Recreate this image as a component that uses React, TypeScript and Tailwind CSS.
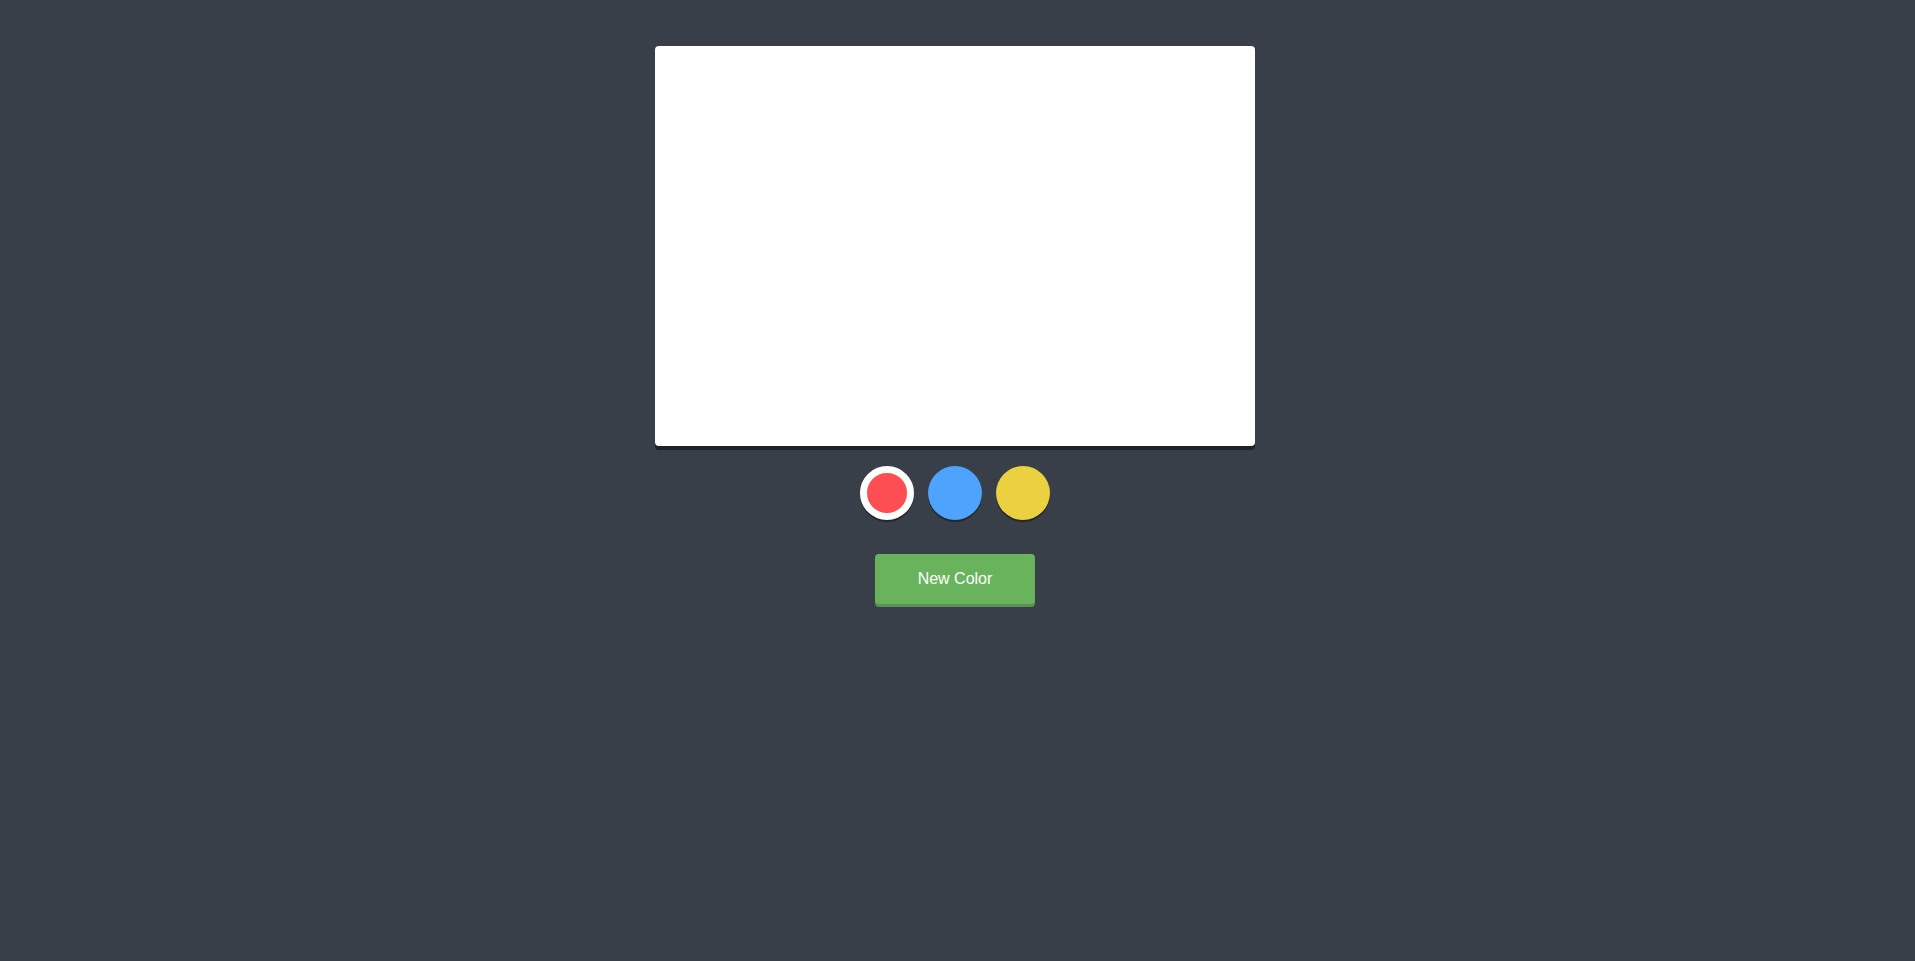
import React, { useState } from "react";

const colors = ["#fd4f53", "#4ea3fc", "#ebd13f"];

export default function App() {
  const [sel, setSel] = useState(0);
  return (
    <div className="min-h-screen w-full bg-[#383f48] flex flex-col items-center pt-[46px] pr-[5px]" style={{ fontFamily: '"Liberation Sans", Arial, sans-serif' }}>
      <div className="w-[600px] h-[400px] bg-white rounded-[4px] shadow-[0_4px_0_#1f2226]" />
      <div className="flex gap-[14px] mt-5">
        {colors.map((c, i) => (
          <button
            key={c}
            onClick={() => setSel(i)}
            className={
              i === sel
                ? "w-[54px] h-[54px] rounded-full border-[7px] border-white shadow-[0_2px_0_#23272c]"
                : "w-[54px] h-[54px] rounded-full shadow-[0_2px_0_#23272c]"
            }
            style={{ backgroundColor: c }}
          />
        ))}
      </div>
      <button className="mt-[34px] w-[160px] h-[50px] rounded-[4px] bg-[#68b35c] text-white text-[16px] shadow-[0_3px_0_#5b8f53]">
        New Color
      </button>
    </div>
  );
}
